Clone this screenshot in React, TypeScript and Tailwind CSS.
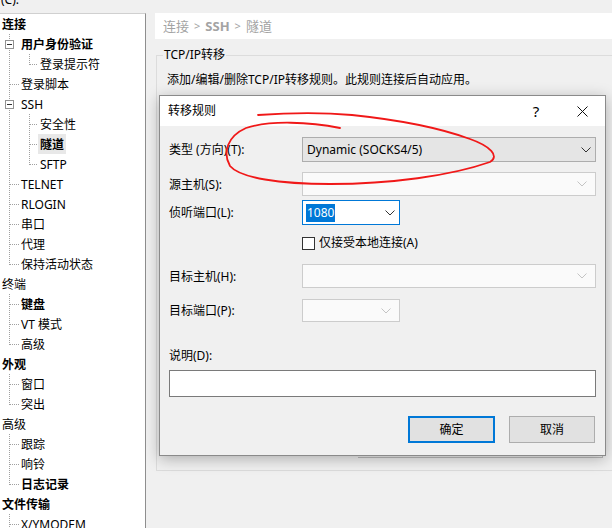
import React from 'react';

type TreeNode = {
  label: string;
  level: 0 | 1 | 2;
  bold?: boolean;
  expander?: boolean;
  last?: boolean;
  selected?: boolean;
};

const tree: TreeNode[] = [
  { label: '连接', level: 0, bold: true },
  { label: '用户身份验证', level: 1, bold: true, expander: true },
  { label: '登录提示符', level: 2, last: true },
  { label: '登录脚本', level: 1 },
  { label: 'SSH', level: 1, expander: true },
  { label: '安全性', level: 2 },
  { label: '隧道', level: 2, bold: true, selected: true },
  { label: 'SFTP', level: 2, last: true },
  { label: 'TELNET', level: 1 },
  { label: 'RLOGIN', level: 1 },
  { label: '串口', level: 1 },
  { label: '代理', level: 1 },
  { label: '保持活动状态', level: 1, last: true },
  { label: '终端', level: 0 },
  { label: '键盘', level: 1, bold: true },
  { label: 'VT 模式', level: 1 },
  { label: '高级', level: 1, last: true },
  { label: '外观', level: 0, bold: true },
  { label: '窗口', level: 1 },
  { label: '突出', level: 1, last: true },
  { label: '高级', level: 0 },
  { label: '跟踪', level: 1 },
  { label: '响铃', level: 1 },
  { label: '日志记录', level: 1, bold: true, last: true },
  { label: '文件传输', level: 0, bold: true },
  { label: 'X/YMODEM', level: 1 },
];

const DOT = '#a0a0a0';

function Connector({ node }: { node: TreeNode }) {
  if (node.level === 0) return <div className="w-[2px] shrink-0" />;
  const w = node.level === 1 ? 21 : 40;
  return (
    <svg width={w} height={20} className="shrink-0" shapeRendering="crispEdges">
      {node.level === 1 ? (
        <>
          <line x1={9.5} y1={0} x2={9.5} y2={node.last ? 11 : 20} stroke={DOT} strokeDasharray="1 1" />
          {node.expander ? (
            <>
              <rect x={5.5} y={6.5} width={8} height={8} fill="#fff" stroke="#919191" />
              <line x1={7} y1={10.5} x2={12} y2={10.5} stroke="#333" />
            </>
          ) : (
            <line x1={10} y1={10.5} x2={19} y2={10.5} stroke={DOT} strokeDasharray="1 1" />
          )}
        </>
      ) : (
        <>
          <line x1={9.5} y1={0} x2={9.5} y2={20} stroke={DOT} strokeDasharray="1 1" />
          <line x1={29.5} y1={0} x2={29.5} y2={node.last ? 11 : 20} stroke={DOT} strokeDasharray="1 1" />
          <line x1={30} y1={10.5} x2={38} y2={10.5} stroke={DOT} strokeDasharray="1 1" />
        </>
      )}
    </svg>
  );
}

function Chevron({ light }: { light?: boolean }) {
  return (
    <svg width={10} height={6} className="shrink-0">
      <polyline points="0.5,0.5 5,5 9.5,0.5" fill="none" stroke={light ? '#c4c4c4' : '#333'} strokeWidth={1} />
    </svg>
  );
}

function Label({ children }: { children: React.ReactNode }) {
  return <div className="w-[133px] shrink-0 leading-[16px] pt-[1px]">{children}</div>;
}

function DisabledCombo({ width }: { width: string }) {
  return (
    <div className={`${width} h-full border border-[#cccccc] bg-[#fafafa] flex items-center justify-end pr-[8px]`}>
      <Chevron light />
    </div>
  );
}

export default function App() {
  return (
    <div className="relative w-[612px] h-[528px] overflow-hidden bg-[#f0f0f0] text-[12px] text-black font-['Noto_Sans','Noto_Sans_CJK_SC',sans-serif]">
      <div className="h-[13px] overflow-hidden pl-[1px]">
        <div className="-mt-[8px] leading-[16px]">(C):</div>
      </div>

      <div className="flex h-[515px]">
        {/* tree */}
        <div className="w-[146px] shrink-0 bg-white border-t border-r border-t-[#d0d0d0] border-r-[#8e8e8e] overflow-hidden">
          {tree.map((n, i) => (
            <div key={i} className="flex items-center h-[20px]">
              <Connector node={n} />
              <span
                className={`pt-[2px] leading-[18px] whitespace-nowrap ${n.bold ? 'font-bold' : ''} ${
                  n.selected ? 'bg-[#e8e8e8] -ml-[2px] px-[2px]' : ''
                }`}
              >
                {n.label}
              </span>
            </div>
          ))}
        </div>

        {/* right side */}
        <div className="flex-1 flex flex-col">
          <div className="ml-[9px] h-[26px] bg-white flex items-center pl-[8px] pt-[1px] text-[13px] text-[#a3a3a3] whitespace-nowrap">
            连接 <span className="mx-[5px] text-[11px]">&gt;</span> <span className="font-bold">SSH</span>
            <span className="mx-[5px] text-[11px]">&gt;</span> 隧道
          </div>

          <div className="ml-[10px] mt-[16px] h-[416px] border-t border-l border-b border-[#dcdcdc] flex flex-col">
            <div className="-mt-[9px] ml-[6px] px-[1px] w-fit bg-[#f0f0f0] leading-[16px]">TCP/IP转移</div>
            <div className="mt-[9px] ml-[10px] leading-[16px] whitespace-nowrap">
              添加/编辑/删除TCP/IP转移规则。此规则连接后自动应用。
            </div>
            <div className="flex-1" />
            <div className="ml-[201px] w-[245px] h-[30px] border-r border-b border-[#bcbcbc] mb-[12px]" />
          </div>
        </div>
      </div>

      {/* dialog */}
      <div className="absolute left-[159px] top-[95px] w-[447px] border border-[#8a8a8a] bg-[#f0f0f0] shadow-[0_3px_14px_rgba(0,0,0,0.28)] flex flex-col">
        <div className="h-[30px] bg-white flex items-center">
          <span className="flex-1 pl-[8px] leading-[16px]">转移规则</span>
          <span className="w-[46px] text-center text-[15px] leading-[16px]">?</span>
          <span className="w-[46px] flex items-center justify-center">
            <svg width={11} height={11}>
              <path d="M0.5 0.5 L10.5 10.5 M10.5 0.5 L0.5 10.5" stroke="#111" strokeWidth={1} />
            </svg>
          </span>
        </div>

        <div className="flex flex-col pl-[9px] pr-[9px] pb-[12px]">
          <div className="mt-[11px] h-[25px] flex items-center">
            <Label>类型 (方向)(T):</Label>
            <div className="flex-1 h-full border border-[#adadad] bg-[#e5e5e5] flex items-center pl-[4px] pr-[4px]">
              <span className="flex-1 leading-[16px]">Dynamic (SOCKS4/5)</span>
              <Chevron />
            </div>
          </div>

          <div className="mt-[10px] h-[24px] flex items-center">
            <Label>源主机(S):</Label>
            <DisabledCombo width="flex-1" />
          </div>

          <div className="mt-[4px] h-[25px] flex items-center">
            <Label>侦听端口(L):</Label>
            <div className="w-[98px] h-full border border-[#0078d7] bg-white flex items-center pl-[3px] pr-[4px]">
              <span className="flex-1">
                <span className="bg-[#0078d7] text-white px-[1px] leading-[18px] inline-block">1080</span>
              </span>
              <Chevron />
            </div>
          </div>

          <div className="mt-[12px] h-[12px] flex items-center">
            <div className="w-[133px] shrink-0" />
            <div className="w-[13px] h-[13px] border border-[#333] bg-white shrink-0" />
            <span className="ml-[4px] leading-[16px]">仅接受本地连接(A)</span>
          </div>

          <div className="mt-[15px] h-[24px] flex items-center">
            <Label>目标主机(H):</Label>
            <DisabledCombo width="flex-1" />
          </div>

          <div className="mt-[11px] h-[23px] flex items-center">
            <Label>目标端口(P):</Label>
            <DisabledCombo width="w-[98px]" />
          </div>

          <div className="mt-[25px] h-[16px] leading-[16px] pt-[1px]">说明(D):</div>
          <div className="mt-[7px] h-[27px] border border-[#7a7a7a] bg-white" />

          <div className="mt-[19px] flex justify-end gap-[14px] pr-[1px]">
            <button className="w-[87px] h-[27px] border-2 border-[#0078d7] bg-[#e1e1e1] leading-[16px]">确定</button>
            <button className="w-[86px] h-[27px] border border-[#adadad] bg-[#e1e1e1] leading-[16px]">取消</button>
          </div>
        </div>
      </div>

      {/* red hand-drawn annotation */}
      <svg className="absolute left-0 top-0 pointer-events-none" width={612} height={528}>
        <path
          d="M340 128 C310 122, 270 120, 246 128 C228 136, 222 152, 230 166 C240 178, 280 184, 330 184 C390 184, 450 176, 490 162 C500 156, 490 146, 470 139 C440 128, 400 120, 352 115 C320 112, 285 113, 258 115"
          fill="none"
          stroke="#f01818"
          strokeWidth={1.8}
          strokeLinecap="round"
          strokeLinejoin="round"
        />
      </svg>
    </div>
  );
}
